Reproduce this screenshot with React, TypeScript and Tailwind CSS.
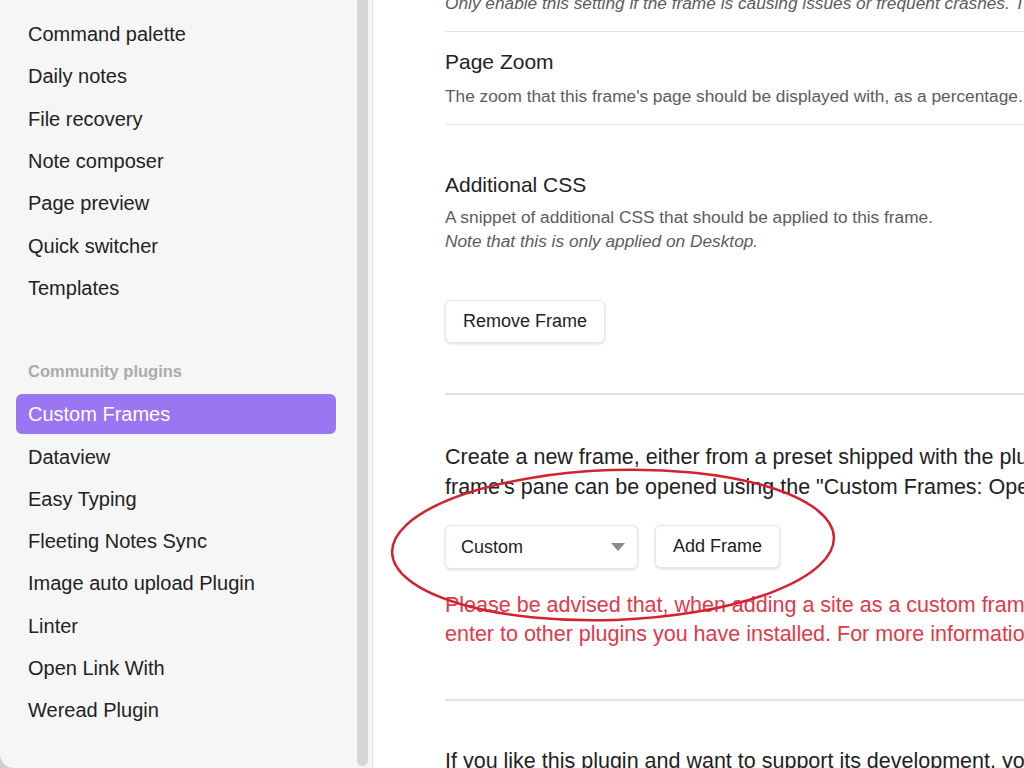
const core = [
  'Command palette',
  'Daily notes',
  'File recovery',
  'Note composer',
  'Page preview',
  'Quick switcher',
  'Templates',
];

const community = [
  'Custom Frames',
  'Dataview',
  'Easy Typing',
  'Fleeting Notes Sync',
  'Image auto upload Plugin',
  'Linter',
  'Open Link With',
  'Weread Plugin',
];

function NavItem({ label, active }: { label: string; active?: boolean }) {
  return (
    <div className="h-[42.3px] flex items-center">
      <div
        className={`w-full h-[40px] flex items-center px-3 rounded-md text-[20px] whitespace-nowrap ${
          active ? 'bg-[#9b76f3] text-white' : 'text-[#222222]'
        }`}
      >
        {label}
      </div>
    </div>
  );
}

export default function App() {
  return (
    <div
      className="relative w-[1024px] h-[768px] overflow-hidden flex bg-[#cfcfcf]"
      style={{ fontFamily: '"Liberation Sans", Arial, sans-serif' }}
    >
      {/* Sidebar */}
      <aside className="w-[373px] shrink-0 flex bg-[#f6f6f6] border-r border-[#e2e2e2] rounded-bl-[14px]">
        <div className="w-[357px] shrink-0 pl-4 pr-[21px] pt-[13px]">
          {core.map((l) => (
            <NavItem key={l} label={l} />
          ))}
          <div className="mt-[47px] h-[30px] flex items-center px-3 text-[16.5px] font-bold text-[#ababab] whitespace-nowrap">
            Community plugins
          </div>
          <div className="mt-[7px]">
            {community.map((l, i) => (
              <NavItem key={l} label={l} active={i === 0} />
            ))}
          </div>
        </div>
        {/* scrollbar track */}
        <div className="w-[11px] shrink-0 h-[766px] bg-[#d6d6d6] rounded-b-full" />
        <div className="w-[4px] shrink-0" />
      </aside>

      {/* Main settings pane */}
      <main className="flex-1 bg-white overflow-hidden pl-[72px] text-[#222222]">
        <div className="w-[1000px]">
          <div className="mt-[-9px] h-[24px] leading-[24px] text-[17.3px] italic text-[#5c5c5c] whitespace-nowrap">
            Only enable this setting if the frame is causing issues or frequent crashes. This requires a reload to take effect.
          </div>
          <div className="mt-[16px] border-t border-[#e3e3e3]" />

          <div className="mt-[16px] h-[28px] leading-[28px] text-[21px] whitespace-nowrap">Page Zoom</div>
          <div className="mt-[8px] h-[24px] leading-[24px] text-[17.3px] text-[#5c5c5c] whitespace-nowrap">
            The zoom that this frame's page should be displayed with, as a percentage.
          </div>
          <div className="mt-[16px] border-t border-[#e3e3e3]" />

          <div className="mt-[46px] h-[28px] leading-[28px] text-[21px] whitespace-nowrap">Additional CSS</div>
          <div className="mt-[6px] leading-[24px] text-[17.3px] text-[#5c5c5c] whitespace-nowrap">
            A snippet of additional CSS that should be applied to this frame.
            <br />
            <span className="italic">Note that this is only applied on Desktop.</span>
          </div>

          <button className="mt-[47px] h-[43px] px-[17px] rounded-md bg-white border border-[#e6e6e6] shadow-[0_1px_3px_rgba(0,0,0,0.15)] text-[18px] text-[#222222]">
            Remove Frame
          </button>

          <div className="mt-[50px] border-t-2 border-[#e3e3e3]" />

          <div className="mt-[47px] leading-[30px] text-[21.5px] whitespace-nowrap">
            Create a new frame, either from a preset shipped with the plugin, or a custom one that you can edit yourself. Each
            <br />
            frame's pane can be opened using the "Custom Frames: Open" command.
          </div>

          <div className="mt-[23px] flex gap-[17px]">
            <div className="w-[193px] h-[44px] pl-[15px] pr-[12px] flex items-center justify-between rounded-md bg-white border border-[#e6e6e6] shadow-[0_1px_3px_rgba(0,0,0,0.15)] text-[18px]">
              <span>Custom</span>
              <svg width="14" height="9" viewBox="0 0 14 9">
                <path d="M0 0 L14 0 L7 8 Z" fill="#8a8a8a" />
              </svg>
            </div>
            <button className="h-[43px] px-[17px] rounded-md bg-white border border-[#e6e6e6] shadow-[0_1px_3px_rgba(0,0,0,0.15)] text-[18px] text-[#222222]">
              Add Frame
            </button>
          </div>

          <div className="mt-[22px] leading-[29px] text-[21.5px] text-[#e03a4a] whitespace-nowrap">
            Please be advised that, when adding a site as a custom frame, you potentially expose any data you
            <br />
            enter to other plugins you have installed. For more information, see the README.
          </div>

          <div className="mt-[50px] border-t-2 border-[#e3e3e3]" />

          <div className="mt-[45px] leading-[30px] text-[21.5px] whitespace-nowrap">
            If you like this plugin and want to support its development, you can do so through my website.
          </div>
        </div>
      </main>

      {/* Red annotation ellipse */}
      <svg
        className="absolute left-[386px] top-[464px] pointer-events-none"
        width="454"
        height="162"
        viewBox="0 0 454 162"
      >
        <ellipse
          cx="227"
          cy="81"
          rx="221"
          ry="75"
          transform="rotate(-2 227 81)"
          fill="none"
          stroke="#d42330"
          strokeWidth="2.5"
        />
      </svg>
    </div>
  );
}
